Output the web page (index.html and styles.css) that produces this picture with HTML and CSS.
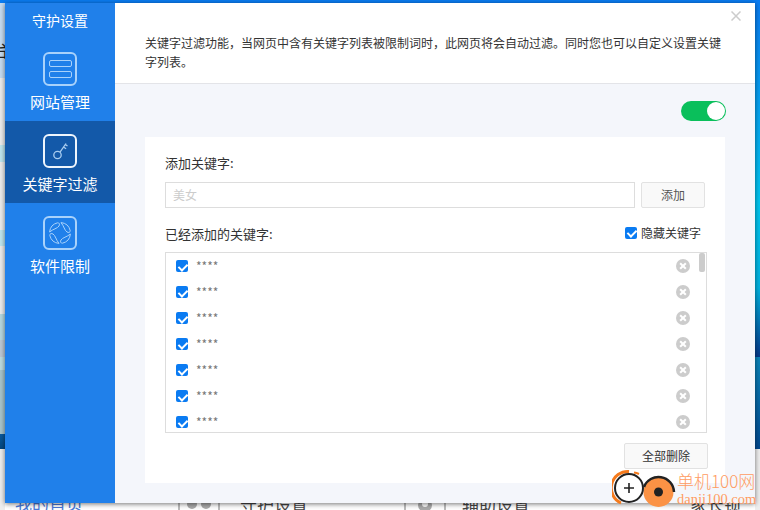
FILE: index.html
```html
<!DOCTYPE html>
<html lang="zh-CN">
<head>
<meta charset="utf-8">
<title>守护设置</title>
<link rel="stylesheet" href="styles.css">
</head>
<body>
<div class="desktop">
  <div class="strip strip-left"><span class="strip-glyph">台</span></div>
  <div class="strip strip-right"></div>
  <div class="peek peek-home">我的首页</div>
  <svg class="peek peek-icon-a" width="42" height="10" viewBox="0 0 42 10"><rect x="0" y="0" width="2" height="10" fill="#bbb"/><rect x="40" y="0" width="2" height="10" fill="#bbb"/><circle cx="14" cy="4" r="5" fill="#aaa"/><circle cx="28" cy="4" r="5" fill="#aaa"/></svg>
  <div class="peek peek-guard">守护设置</div>
  <svg class="peek peek-icon-b" width="42" height="10" viewBox="0 0 42 10"><rect x="0" y="0" width="2" height="10" fill="#bbb"/><rect x="40" y="0" width="2" height="10" fill="#bbb"/><circle cx="21" cy="5" r="7" fill="#aaa"/><circle cx="21" cy="4" r="3" fill="#fff"/></svg>
  <div class="peek peek-assist">辅助设置</div>
  <div class="peek peek-parent">家长锁</div>

  <div class="dialog">
    <aside class="sidebar">
      <h1 class="side-title">守护设置</h1>
      <div class="side-item">
        <svg class="side-icon" width="34" height="34" viewBox="0 0 34 34" fill="none" stroke="#a9d2fb"><rect x="1" y="1" width="32" height="32" rx="5" stroke-width="2"/><rect x="6.5" y="8.5" width="22" height="6" rx="1.5"/><rect x="6.5" y="19.5" width="22" height="6" rx="1.5"/></svg>
        <span class="side-label">网站管理</span>
      </div>
      <div class="side-item side-item-active">
        <svg class="side-icon" width="34" height="34" viewBox="0 0 34 34" fill="none"><rect x="1" y="1" width="32" height="32" rx="5" stroke="#eef5fd" stroke-width="2"/><g stroke="#a9cdf0" stroke-width="1.3"><circle cx="14.5" cy="21" r="3.7"/><path d="M17 18.2 23 9.5M20.5 13l2.6 1.8M22.3 10.6l2.2 1.4"/></g></svg>
        <span class="side-label">关键字过滤</span>
      </div>
      <div class="side-item">
        <svg class="side-icon" width="34" height="34" viewBox="0 0 34 34" fill="none" stroke="#a9d2fb"><rect x="1" y="1" width="32" height="32" rx="5" stroke-width="2"/><path d="M6.6 16A10.5 10.5 0 0 1 14.5 6.8C16.5 6.6 17 8.5 16 10 14.5 12.5 10 13 6.6 16Z"/><path d="M6.6 16A10.5 10.5 0 0 1 14.5 6.8C16.5 6.6 17 8.5 16 10 14.5 12.5 10 13 6.6 16Z" transform="rotate(90 17 17)"/><path d="M6.6 16A10.5 10.5 0 0 1 14.5 6.8C16.5 6.6 17 8.5 16 10 14.5 12.5 10 13 6.6 16Z" transform="rotate(180 17 17)"/><path d="M6.6 16A10.5 10.5 0 0 1 14.5 6.8C16.5 6.6 17 8.5 16 10 14.5 12.5 10 13 6.6 16Z" transform="rotate(270 17 17)"/></svg>
        <span class="side-label">软件限制</span>
      </div>
    </aside>

    <main class="main">
      <svg class="dialog-close" width="10" height="10" viewBox="0 0 10 10" stroke="#ccc" stroke-width="1.5"><path d="M0.5 0.5 9.5 9.5M9.5 0.5 0.5 9.5"/></svg>
      <header class="main-head">
        <p class="intro">关键字过滤功能，当网页中含有关键字列表被限制词时，此网页将会自动过滤。同时您也可以自定义设置关键字列表。</p>
      </header>
      <section class="main-body">
        <div class="toggle-row"><span class="toggle"><span class="knob"></span></span></div>
        <div class="panel">
          <div class="label-row"><span>添加关键字:</span></div>
          <div class="add-row">
            <div class="text-input">美女</div>
            <div class="btn btn-add">添加</div>
          </div>
          <div class="label-row label-row-second">
            <span>已经添加的关键字:</span>
            <span class="hide-option"><span class="check"></span>隐藏关键字</span>
          </div>
          <div class="list">
            <div class="rows">
              <div class="row"><span class="check"></span><span class="mask">****</span><span class="remove"></span></div>
              <div class="row"><span class="check"></span><span class="mask">****</span><span class="remove"></span></div>
              <div class="row"><span class="check"></span><span class="mask">****</span><span class="remove"></span></div>
              <div class="row"><span class="check"></span><span class="mask">****</span><span class="remove"></span></div>
              <div class="row"><span class="check"></span><span class="mask">****</span><span class="remove"></span></div>
              <div class="row"><span class="check"></span><span class="mask">****</span><span class="remove"></span></div>
              <div class="row"><span class="check"></span><span class="mask">****</span><span class="remove"></span></div>
            </div>
            <div class="scrollbar"><div class="thumb"></div></div>
          </div>
          <div class="action-row"><div class="btn btn-clear">全部删除</div></div>
        </div>
      </section>
    </main>
  </div>

  <svg class="logo" width="70" height="40" viewBox="0 0 70 40" fill="none">
    <path d="M17 2.5A16.5 16.5 0 0 0 9 34" stroke="#f57a1c" stroke-width="3"/>
    <path d="M22 3.5A17 17 0 0 1 27 5" stroke="#f57a1c" stroke-width="2"/>
    <circle cx="46.5" cy="23" r="15" fill="#fb9245"/>
    <path d="M32 18A15.5 15.5 0 0 1 62 23" stroke="#222" stroke-width="2.5"/>
    <circle cx="46.5" cy="23" r="4.5" fill="#222"/>
    <circle cx="17" cy="19" r="14" fill="#fff" stroke="#222" stroke-width="2"/>
    <path d="M12 19h10M17 14v10" stroke="#222" stroke-width="1.6"/>
  </svg>
  <div class="watermark">
    <div class="wm-cn">单机100网</div>
    <div class="wm-en">danji100.com</div>
  </div>
</div>
</body>
</html>
```
FILE: styles.css
```css
* { box-sizing: border-box; }
html, body { margin: 0; padding: 0; }
body {
  width: 760px;
  height: 510px;
  overflow: hidden;
  background: #fff;
  font-family: "Noto Sans CJK SC", "Liberation Sans", sans-serif;
  font-size: 12px;
  color: #333;
}
.desktop {
  position: relative;
  width: 760px;
  height: 510px;
  overflow: hidden;
  background: linear-gradient(#0a7cf2 0 3px, #fff 3px);
}

/* background application showing around the dialog */
.strip { position: absolute; top: 3px; width: 5px; height: 507px; overflow: hidden; }
.strip-left {
  left: 0;
  background: linear-gradient(#c6dcf1 0 75px, #ececec 75px 142px, #bfe6ef 142px 159px, #ececec 159px 227px, #bfe6ef 227px 243px, #ececec 243px 311px, #b5d8e0 311px 337px, #bcc8d4 337px 354px, #bcdce0 354px 367px, #a8c4cc 367px 431px, #0a5a9f 431px, #03467f 446px, #eee 446px);
}
.strip-glyph { position: absolute; left: -9px; top: 35px; font-size: 18px; line-height: 22px; color: #222; }
.strip-right {
  right: 0;
  background: linear-gradient(#0a7cf2 0, #00c6f0 200px, #00b2e0 285px, #05388a 354px, #0a84ba 354px, #02488f 446px, #eee 446px);
}
.peek { position: absolute; }
.peek-home { left: 15px; top: 492px; font-size: 17px; line-height: 22px; color: #4a78d8; }
.peek-icon-a { left: 178px; top: 500px; }
.peek-guard { left: 240px; top: 493px; font-size: 17px; line-height: 22px; color: #444; }
.peek-icon-b { left: 404px; top: 500px; }
.peek-assist { left: 462px; top: 493px; font-size: 17px; line-height: 22px; color: #444; }
.peek-parent { left: 690px; top: 493px; font-size: 17px; line-height: 22px; color: #444; }

/* dialog window */
.dialog {
  position: absolute;
  left: 5px;
  top: 3px;
  width: 750px;
  height: 500px;
  display: flex;
  background: #fff;
  box-shadow: 0 1px 5px rgba(0, 0, 0, .55);
}
.sidebar {
  width: 110px;
  flex: none;
  background: #2080ea;
  color: #fff;
}
.side-title {
  margin: 0;
  height: 36px;
  padding-top: 7px;
  font-size: 14px;
  font-weight: 400;
  line-height: 20px;
  text-align: center;
}
.side-item {
  height: 82px;
  padding-top: 13px;
  display: flex;
  flex-direction: column;
  align-items: center;
}
.side-item-active { background: #1359a9; }
.side-icon { display: block; flex: none; }
.side-label { margin-top: 5px; font-size: 15px; line-height: 22px; }

.main {
  position: relative;
  flex: 1;
  display: flex;
  flex-direction: column;
  min-width: 0;
}
.dialog-close { position: absolute; right: 14px; top: 8px; }
.main-head {
  height: 81px;
  flex: none;
  padding: 30px 30px 0;
  border-bottom: 1px solid #e3e4e8;
}
.intro { margin: 0; width: 580px; line-height: 19px; color: #333; }
.main-body {
  flex: 1;
  background: #f4f6fb;
  padding: 17px 30px 20px;
  display: flex;
  flex-direction: column;
}
.toggle-row { display: flex; justify-content: flex-end; height: 20px; flex: none; margin-right: -1px; }
.toggle {
  width: 45px;
  height: 20px;
  border-radius: 10px;
  background: #0abf5b;
  display: flex;
  justify-content: flex-end;
  padding: 1px;
}
.knob { width: 18px; height: 18px; border-radius: 50%; background: #fff; }
.panel {
  margin-top: 16px;
  flex: 1;
  background: #fff;
  padding: 16px 18px 0 20px;
  display: flex;
  flex-direction: column;
}
.label-row {
  height: 20px;
  flex: none;
  font-size: 13px;
  line-height: 20px;
  display: flex;
  justify-content: space-between;
  align-items: center;
  color: #333;
}
.label-row-second { margin-top: 16px; }
.add-row { margin-top: 9px; display: flex; gap: 6px; height: 26px; flex: none; padding-right: 2px; }
.text-input {
  flex: 1;
  border: 1px solid #ddd;
  padding-left: 7px;
  line-height: 24px;
  color: #ccc;
}
.btn {
  border: 1px solid #e2e2e2;
  border-radius: 2px;
  background: #f9f9f9;
  text-align: center;
  line-height: 24px;
  height: 26px;
}
.btn-add { width: 64px; color: #555; }
.hide-option { display: flex; align-items: center; gap: 4px; padding-right: 6px; margin-top: -3px; font-size: 12px; }
.check {
  position: relative;
  display: block;
  flex: none;
  width: 12px;
  height: 12px;
  border-radius: 2px;
  background: #0a7bf2;
}
.check::after {
  content: "";
  position: absolute;
  left: 4px;
  top: 1.5px;
  width: 4px;
  height: 7px;
  border: solid #fff;
  border-width: 0 2px 2px 0;
  transform: rotate(45deg);
}
.list {
  margin-top: 8px;
  height: 181px;
  flex: none;
  border: 1px solid #ddd;
  display: flex;
  overflow: hidden;
}
.rows { flex: 1; min-width: 0; }
.row {
  height: 26px;
  display: flex;
  align-items: center;
  padding: 0 9px 0 10px;
}
.mask { margin-left: 8px; flex: 1; font-size: 12px; line-height: 16px; color: #777; }
.remove {
  position: relative;
  display: block;
  flex: none;
  width: 14px;
  height: 14px;
  border-radius: 50%;
  background: #ccc;
}
.remove::before, .remove::after {
  content: "";
  position: absolute;
  left: 3px;
  top: 6px;
  width: 8px;
  height: 2px;
  background: #fff;
  transform: rotate(45deg);
}
.remove::after { transform: rotate(-45deg); }
.scrollbar { width: 7px; flex: none; background: #fff; }
.thumb { width: 6px; height: 19px; margin-left: 0; background: #ccc; border-radius: 2px; }
.action-row { margin-top: 10px; display: flex; justify-content: flex-end; flex: none; }
.btn-clear { width: 84px; margin-right: -1px; color: #333; }

/* site watermark over the screenshot */
.logo { position: absolute; left: 612px; top: 469px; }
.watermark { position: absolute; left: 677px; top: 471px; width: 83px; color: #ff9c62; }
.wm-cn { font-size: 17px; line-height: 20px; white-space: nowrap; font-weight: 300; }
.wm-en { font-size: 14.5px; line-height: 16px; white-space: nowrap; font-family: "Liberation Serif", serif; }
```
